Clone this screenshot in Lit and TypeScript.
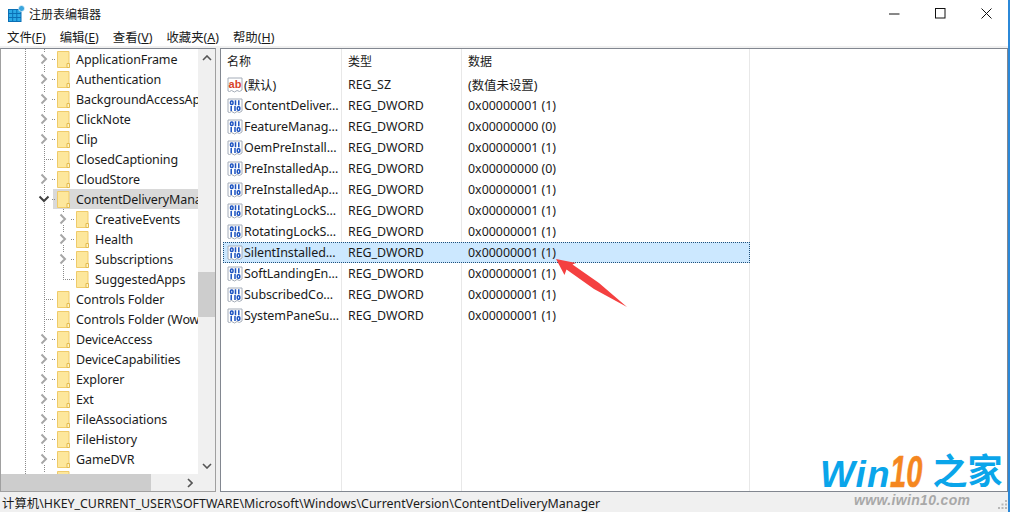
import { LitElement, html, css, svg } from "lit";
import { customElement } from "lit/decorators.js";

type TreeRow = { t: string; depth: 0 | 1; chev?: "r" | "d" | ""; sel?: boolean; last?: boolean };
const tree: TreeRow[] = [
  { t: "ApplicationFrame", depth: 0, chev: "r" },
  { t: "Authentication", depth: 0, chev: "r" },
  { t: "BackgroundAccessApplications", depth: 0, chev: "r" },
  { t: "ClickNote", depth: 0, chev: "r" },
  { t: "Clip", depth: 0, chev: "r" },
  { t: "ClosedCaptioning", depth: 0, chev: "" },
  { t: "CloudStore", depth: 0, chev: "r" },
  { t: "ContentDeliveryManager", depth: 0, chev: "d", sel: true },
  { t: "CreativeEvents", depth: 1, chev: "r" },
  { t: "Health", depth: 1, chev: "r" },
  { t: "Subscriptions", depth: 1, chev: "r" },
  { t: "SuggestedApps", depth: 1, chev: "", last: true },
  { t: "Controls Folder", depth: 0, chev: "" },
  { t: "Controls Folder (Wow64)", depth: 0, chev: "" },
  { t: "DeviceAccess", depth: 0, chev: "r" },
  { t: "DeviceCapabilities", depth: 0, chev: "r" },
  { t: "Explorer", depth: 0, chev: "r" },
  { t: "Ext", depth: 0, chev: "r" },
  { t: "FileAssociations", depth: 0, chev: "r" },
  { t: "FileHistory", depth: 0, chev: "r" },
  { t: "GameDVR", depth: 0, chev: "r" },
  { t: "", depth: 0, chev: "r" },
];

const values: [string, string, string, string][] = [
  ["ab", "(默认)", "REG_SZ", "(数值未设置)"],
  ["bin", "ContentDeliver...", "REG_DWORD", "0x00000001 (1)"],
  ["bin", "FeatureManag...", "REG_DWORD", "0x00000000 (0)"],
  ["bin", "OemPreInstall...", "REG_DWORD", "0x00000001 (1)"],
  ["bin", "PreInstalledAp...", "REG_DWORD", "0x00000000 (0)"],
  ["bin", "PreInstalledAp...", "REG_DWORD", "0x00000001 (1)"],
  ["bin", "RotatingLockS...", "REG_DWORD", "0x00000001 (1)"],
  ["bin", "RotatingLockS...", "REG_DWORD", "0x00000001 (1)"],
  ["bin", "SilentInstalled...", "REG_DWORD", "0x00000001 (1)"],
  ["bin", "SoftLandingEn...", "REG_DWORD", "0x00000001 (1)"],
  ["bin", "SubscribedCo...", "REG_DWORD", "0x00000001 (1)"],
  ["bin", "SystemPaneSu...", "REG_DWORD", "0x00000001 (1)"],
];

const folder = html`<svg class="folder" width="13" height="17" viewBox="0 0 13 17">
  <path d="M.5.5h11.500v16H.5z" fill="#fde79c" stroke="#efcb6a"/>
  <path d="M10 16.500v-4h2.500v4z" fill="#fff3c9" stroke="#e3bb4f"/>
</svg>`;

const page = svg`<path d="M1 1h14v12l-2.500 1.500-2.500-1-2.500 1.500-3-1.500-2 1-1.500-.5z" fill="#fff" stroke="#a4acb8"/>`;
const binIcon = html`<svg class="vicon" width="16" height="16" viewBox="0 0 16 16">
  ${page}
  <g fill="none" stroke="#1b52c0" stroke-width="1.500">
    <rect x="3.500" y="3" width="2.500" height="3.500" rx="1"/><path d="M8.500 2.300v5M11.800 2.300v5"/>
    <path d="M4.200 8v5M8 8v5"/><rect x="10.300" y="8.700" width="2.500" height="3.500" rx="1"/>
  </g>
</svg>`;
const abIcon = html`<svg class="vicon" width="16" height="16" viewBox="0 0 16 16">
  ${page}
  <text x="8" y="11" text-anchor="middle" class="abt">ab</text>
</svg>`;

const chevR = html`<svg width="8" height="12" viewBox="0 0 8 12"><path d="M1.500 1.500 6 6l-4.500 4.500" fill="none" stroke="#a6a6a6" stroke-width="2"/></svg>`;
const chevD = html`<svg class="down" width="12" height="8" viewBox="0 0 12 8"><path d="M1.500 1.500 6 6l4.500-4.500" fill="none" stroke="#404040" stroke-width="2"/></svg>`;

@customElement("app-root")
export class AppRoot extends LitElement {
  static styles = css`
    :host {
      display: block;
      position: relative;
      width: 1010px;
      height: 512px;
      overflow: hidden;
      background: #f0f0f0;
      font: 12.500px "Noto Sans", "Noto Sans CJK SC", sans-serif;
      letter-spacing: -0.1px;
      color: #1a1a1a;
    }
    .win { display: flex; flex-direction: column; height: 512px; border-right: 2px solid #2b88d8; box-sizing: border-box; }
    .title { height: 26px; background: #fff; display: flex; align-items: center; padding: 0 0 0 8px; flex: none; }
    .title .ttl { margin-left: 4px; font-size: 12px; letter-spacing: 0; margin-top: 1px; }
    .caps { margin-left: auto; margin-right: -1px; display: flex; }
    .cap { width: 46px; height: 25px; display: flex; align-items: center; justify-content: center; }
    .menu { height: 20px; background: #fff; display: flex; align-items: center; flex: none; padding: 2px 0 0 7px; box-sizing: border-box; gap: 14px; font-size: 12.400px; letter-spacing: 0; }
    .menu u { text-underline-offset: 1px; }
    .gapline { height: 2px; background: #f0f0f0; flex: none; }
    .main { flex: 1; display: flex; min-height: 0; gap: 4px; }
    .left { width: 216px; box-sizing: border-box; border: 1px solid #a0a0a0; border-top-color: #828790; background: #fff; display: grid; grid-template-columns: 1fr 17px; grid-template-rows: 1fr 17px; flex: none; min-height: 0; }
    .tree { overflow: hidden; min-width: 0; }
    .row { height: 20px; display: flex; align-items: center; white-space: nowrap; position: relative; }
    .guide { width: 19px; flex: none; height: 100%; background-image: linear-gradient(#8a8a8a 50%, transparent 50%); background-size: 1px 2px; background-repeat: repeat-y; background-position: 6px 0; }
    .g0 { margin-left: 18px; }
    .arrow { width: 19px; height: 100%; flex: none; display: flex; align-items: center; padding-left: 2px; box-sizing: border-box; position: relative; }
    .arrow.line { background-image: linear-gradient(#8a8a8a 50%, transparent 50%); background-size: 1px 2px; background-repeat: repeat-y; background-position: 6px 0; }
    .arrow.plain::after { content: ""; position: absolute; left: 6px; width: 10px; top: 10px; height: 1px; background-image: linear-gradient(90deg,#8a8a8a 50%,transparent 50%); background-size: 2px 1px; }
    .arrow.con::after { content: ""; position: absolute; left: 14px; width: 4px; top: 10px; height: 1px; background-image: linear-gradient(90deg,#8a8a8a 50%,transparent 50%); background-size: 2px 1px; }
    .arrow.last::before { content: ""; position: absolute; left: 6px; top: 0; height: 10px; width: 1px; background-image: linear-gradient(#8a8a8a 50%,transparent 50%); background-size: 1px 2px; }
    .arrow.last::after { content: ""; position: absolute; left: 6px; width: 12px; top: 10px; height: 1px; background-image: linear-gradient(90deg,#8a8a8a 50%,transparent 50%); background-size: 2px 1px; }
    .arrow svg { position: relative; background: #fff; }
    .arrow svg.down { margin-left: -2px; }
    .label { display: flex; align-items: center; height: 100%; flex: 1; min-width: 0; margin-left: -4px; padding-left: 4px; }
    .label.sel { background: #d9d9d9; }
    .folder { flex: none; margin-right: 6px; }
    .vbar { background: #f0f0f0; display: flex; flex-direction: column; align-items: center; }
    .vbar .a { height: 17px; flex: none; display: flex; align-items: center; justify-content: center; width: 100%; }
    .vtrack { flex: 1; display: flex; flex-direction: column; width: 100%; padding-top: 206px; box-sizing: border-box; }
    .vthumb { height: 45px; background: #cdcdcd; width: 100%; }
    .hbar { background: #f0f0f0; display: flex; align-items: center; }
    .hthumb { width: 150px; height: 100%; background: #cdcdcd; flex: none; }
    .harrow { margin-left: auto; width: 17px; display: flex; justify-content: center; }
    .corner { background: #f0f0f0; }
    .right { flex: 1; box-sizing: border-box; border: 1px solid #828790; background: #fff; display: flex; flex-direction: column; min-width: 0; }
    .vrow { display: grid; grid-template-columns: 121px 120px 288px; height: 21px; align-items: center; flex: none; position: relative; }
    .vrow > div { height: 100%; display: flex; align-items: center; box-sizing: border-box; border-right: 1px solid #e8e8e8; white-space: nowrap; }
    .head { height: 25px; }
    .head > div { padding-left: 6px; font-size: 12px; padding-bottom: 2px; letter-spacing: 0; }
    .c1 { padding-left: 6px; }
    .c2, .c3 { padding-left: 6px; font-size: 12.400px; letter-spacing: 0; }
    .vicon { flex: none; margin-right: 1px; }
    .abt { font: bold 11px "Liberation Sans", sans-serif; fill: #d9442a; letter-spacing: 0; }
    .vrow.sel { background: #cce8ff; outline: 1px dotted #20507a; outline-offset: -1px; margin-left: 2px; width: 527px; grid-template-columns: 119px 120px 288px; }
    .vrow.sel > div { border-right-color: transparent; }
    .vrow.sel .c1 { padding-left: 4px; }
    .fill { flex: 1; height: auto; }
    .status { height: 20px; flex: none; background: #f0f0f0; display: flex; align-items: center; padding: 1px 0 0 2px; box-sizing: border-box; font-size: 12.400px; white-space: nowrap; letter-spacing: 0; }
    .ptr { position: absolute; left: 553px; top: 256px; pointer-events: none; }
    .logo { position: absolute; left: 820px; top: 450px; height: 44px; display: flex; align-items: baseline; pointer-events: none; font: italic bold 37px "Liberation Sans", sans-serif; line-height: 44px; letter-spacing: 1px; }
    .logo .w { color: #0aa5ea; }
    .logo .o { color: #f5871f; font-size: 44px; letter-spacing: 0; display: inline-block; transform: scaleX(.66); transform-origin: 0 100%; width: 33px; -webkit-text-stroke: .6px #f5871f; }
    .logo .z { color: #0aa5ea; font: bold 35px "Noto Sans CJK SC", sans-serif; line-height: 44px; margin-left: 9px; letter-spacing: 0; position: relative; top: -3px; }
    .url { position: absolute; left: 854px; top: 492px; font: italic bold 14px "Liberation Sans", sans-serif; color: #a8a8a8; letter-spacing: .35px; pointer-events: none; }
    .grip { position: absolute; right: 2px; bottom: 2px; }
  `;

  private arrowCell(r: TreeRow) {
    if (r.chev === "r") return html`<span class="arrow con line">${chevR}</span>`;
    if (r.chev === "d") return html`<span class="arrow con line">${chevD}</span>`;
    return r.last
      ? html`<span class="arrow last"></span>`
      : html`<span class="arrow line plain"></span>`;
  }

  render() {
    return html`
      <div class="win">
        <div class="title">
          <svg width="17" height="17" viewBox="0 0 17 17">
            <rect x=".5" y="4.500" width="12.500" height="12" fill="#2aa9e6" stroke="#0b6fb5"/>
            <path d="M4.700 4.500v12M8.800 4.500v12M.5 8.500h12.500M.5 12.500h12.500" stroke="#0b6fb5" fill="none"/>
            <circle cx="13.500" cy="3.500" r="3" fill="#3aa5dd" stroke="#fff" stroke-width=".6"/>
          </svg>
          <span class="ttl">注册表编辑器</span>
          <div class="caps">
            <div class="cap"><svg width="11" height="11" viewBox="0 0 11 11"><path d="M0 6h10.500" stroke="#111" fill="none"/></svg></div>
            <div class="cap"><svg width="11" height="11" viewBox="0 0 11 11"><rect x=".5" y=".5" width="9.500" height="9.500" stroke="#111" fill="none"/></svg></div>
            <div class="cap"><svg width="11" height="11" viewBox="0 0 11 11"><path d="M.5.5l10 10M10.500.5l-10 10" stroke="#111" fill="none"/></svg></div>
          </div>
        </div>
        <div class="menu">
          <span>文件(<u>F</u>)</span><span>编辑(<u>E</u>)</span><span>查看(<u>V</u>)</span><span>收藏夹(<u>A</u>)</span><span>帮助(<u>H</u>)</span>
        </div>
        <div class="gapline"></div>
        <div class="main">
          <div class="left">
            <div class="tree">
              ${tree.map(
                (r) => html`<div class="row">
                  <span class="guide g0"></span>
                  ${r.depth === 1
                    ? html`<span class="guide"></span>${this.arrowCell(r)}`
                    : this.arrowCell(r)}
                  <div class="label ${r.sel ? "sel" : ""}">${folder}<span>${r.t}</span></div>
                </div>`
              )}
            </div>
            <div class="vbar">
              <div class="a"><svg width="10" height="6" viewBox="0 0 10 6"><path d="M1 5l4-4 4 4" fill="none" stroke="#555" stroke-width="1.600"/></svg></div>
              <div class="vtrack"><div class="vthumb"></div></div>
              <div class="a"><svg width="10" height="6" viewBox="0 0 10 6"><path d="M1 1l4 4 4-4" fill="none" stroke="#555" stroke-width="1.600"/></svg></div>
            </div>
            <div class="hbar">
              <div class="hthumb"></div>
              <div class="harrow"><svg width="6" height="10" viewBox="0 0 6 10"><path d="M1 1l4 4-4 4" fill="none" stroke="#555" stroke-width="1.600"/></svg></div>
            </div>
            <div class="corner"></div>
          </div>
          <div class="right">
            <div class="vrow head"><div>名称</div><div>类型</div><div>数据</div></div>
            ${values.map(
              (v, i) => html`<div class="vrow ${i === 8 ? "sel" : ""}">
                <div class="c1">${v[0] === "ab" ? abIcon : binIcon}<span>${v[1]}</span></div>
                <div class="c2">${v[2]}</div>
                <div class="c3">${v[3]}</div>
              </div>`
            )}
            <div class="vrow fill"><div></div><div></div><div></div></div>
          </div>
        </div>
        <div class="status">计算机\\HKEY_CURRENT_USER\\SOFTWARE\\Microsoft\\Windows\\CurrentVersion\\ContentDeliveryManager</div>
      </div>
      <svg class="ptr" width="76" height="54" viewBox="0 0 76 54">
        <path d="M3 3 L23 7 L19.500 8.500 L46 27 L74 51 L41 33 L13.500 13.500 L11.500 19 Z" fill="#f44040"/>
      </svg>
      <div class="logo"><span class="w">Win</span><span class="o">10</span><span class="z">之家</span></div>
      <div class="url">www.iwin10.com</div>
      <svg class="grip" width="10" height="10" viewBox="0 0 10 10" fill="#b8b8b8">
        <rect x="7" y="0" width="2" height="2"/><rect x="3.500" y="3.500" width="2" height="2"/><rect x="7" y="3.500" width="2" height="2"/>
        <rect x="0" y="7" width="2" height="2"/><rect x="3.500" y="7" width="2" height="2"/><rect x="7" y="7" width="2" height="2"/>
      </svg>
    `;
  }
}
